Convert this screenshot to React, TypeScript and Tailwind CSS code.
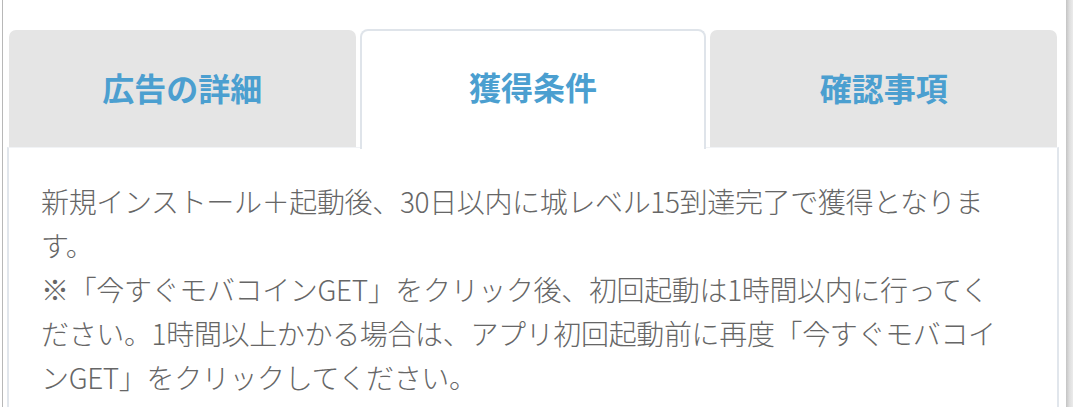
import React from "react";

const JP = { fontFamily: '"Noto Sans CJK JP", "Noto Sans", sans-serif' };

function Tab({ label, active }: { label: string; active?: boolean }) {
  if (active) {
    return (
      <div className="relative z-10 -mb-[2px] flex h-[120px] items-center justify-center rounded-t-[8px] border-2 border-b-0 border-[#dfe4ea] bg-white pb-[8px]">
        <span className="text-[32px] font-bold leading-none text-[#4b9fd0]">{label}</span>
      </div>
    );
  }
  return (
    <div className="flex h-[117px] items-center justify-center rounded-t-[7px] bg-[#e5e5e5] pb-[4px]">
      <span className="text-[32px] font-bold leading-none text-[#4b9fd0]">{label}</span>
    </div>
  );
}

export default function App() {
  return (
    <div className="flex h-[407px] w-[1073px] overflow-hidden bg-white" style={JP}>
      <div className="w-[2px] shrink-0 bg-white" />
      <div className="w-px shrink-0 bg-[#b8b8b8]" />
      <div className="min-w-0 flex-1 pl-[4px] pr-[7px] pt-[29px]">
        <div className="flex flex-col">
          <div className="grid grid-cols-3 items-end gap-[4px] px-[2px]">
            <Tab label="広告の詳細" />
            <Tab label="獲得条件" active />
            <Tab label="確認事項" />
          </div>
          <div className="h-[300px] border-2 border-t border-[#e1e6ec] border-t-[#f1f3f6] bg-white pl-[32px] pr-[16px] pt-[31px]">
            <p className="text-[28px] font-light leading-[44px] tracking-[-0.35px] text-[#666666]">
              新規インストール＋起動後、30日以内に城レベル15到達完了で獲得となりま
              <br />
              す。
              <br />
              ※「今すぐモバコインGET」をクリック後、初回起動は1時間以内に行ってく
              <br />
              ださい。1時間以上かかる場合は、アプリ初回起動前に再度「今すぐモバコイ
              <br />
              ンGET」をクリックしてください。
            </p>
          </div>
        </div>
      </div>
      <div className="w-[7px] shrink-0 bg-gradient-to-r from-[#c4c4c4] via-[#dedede] to-[#ebebeb]" />
    </div>
  );
}
